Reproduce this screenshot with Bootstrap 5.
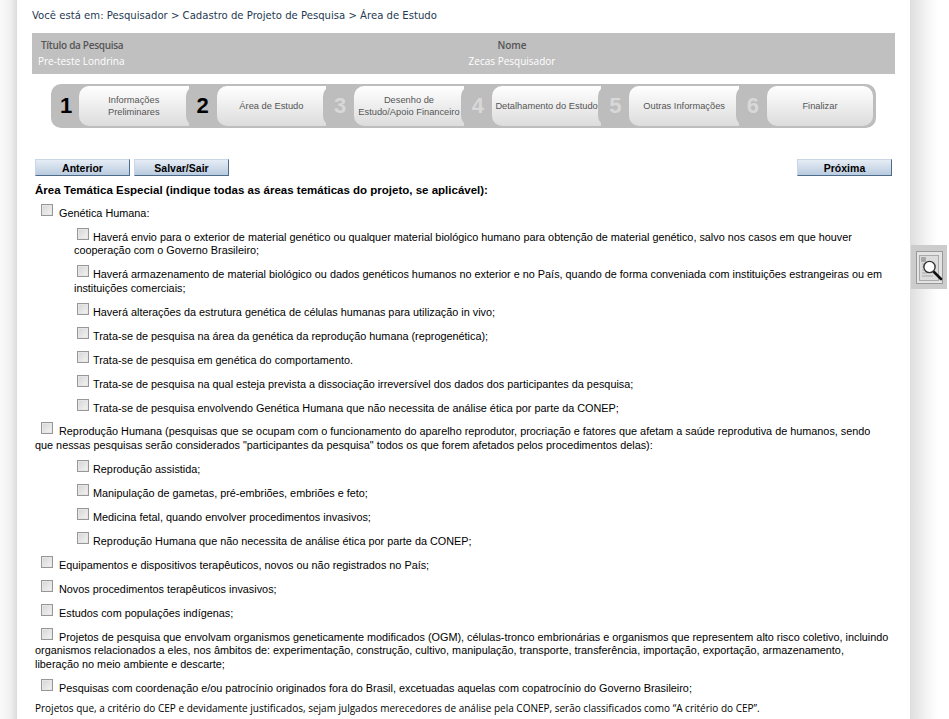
<!DOCTYPE html>
<html lang="pt-BR">
<head>
  <meta charset="UTF-8" />
  <title>Área de Estudo</title>
  <link href="https://cdn.jsdelivr.net/npm/bootstrap@5.3.3/dist/css/bootstrap.min.css" rel="stylesheet">
  <style>
    body {
      background: #fff;
      color: #000;
      font-family: "Liberation Sans", Arial, sans-serif;
      font-size: 10.85px;
      line-height: 13.7px;
    }
    .page-shell { width: 949px; height: 719px; overflow: hidden; }
    .edge-left { width: 17px; background: linear-gradient(to right, #fafafa, #f0f0f0 60%, #dcdcdc); }
    .edge-right { width: 28px; background: linear-gradient(to right, #dedede, #f4f4f4 60%, #fff); }
    .main-col { width: 893px; padding: 0 15px; }
    .trail { font-family: "DejaVu Sans", sans-serif; font-size: 10.1px; line-height: 12px; color: #1f3a52; padding-top: 10px; height: 33px; }
    .info-bar { display: grid; grid-template-columns: 400px 160px; align-content: start; background: #c0c0c0; height: 41px; padding-top: 4px; font-family: "Open Sans", sans-serif; font-size: 10px; line-height: 16px; }
    .info-head { color: #555; font-weight: 600; }
    .info-val { color: #fff; }
    .pad-t { padding-left: 9px; letter-spacing: -0.3px; }
    .pad-v { padding-left: 6px; }
    .steps { margin: 10px 19px 0; height: 44px; width: 825px; background: #bdbdbd; border-radius: 10px; padding: 2px 3px 2px 0; }
    .step-num { width: 31px; margin-left: -3px; flex: none; background: #bdbdbd; border-radius: 10px 0 0 10px; font-weight: 700; font-size: 22px; color: #d8d8d8; text-align: center; position: relative; line-height: 40px; padding-left: 3px; }
    .step-num:first-child { width: 28px; margin-left: 0; padding-left: 2px; }
    .step-num.on { color: #000; }
    .step-tab { width: 109.6px; flex: none; background: linear-gradient(#fff, #dcdcdc); border-radius: 10px 0 0 10px; font-size: 9.3px; line-height: 12px; color: #555; text-align: center; }
    .step-tab.last { width: 106px; border-radius: 10px; }
    .nav-btns { margin-top: 31px; padding: 0 3px; }
    .nav-btn { width: 95px; height: 17px; padding: 0; border: 0; border-right: 1px solid #4d6c8c; border-bottom: 1px solid #4d6c8c; border-top: 1px solid #c8d6e6; border-left: 1px solid #c8d6e6; border-radius: 0; background: linear-gradient(#e6edf5, #b9cbdf); color: #000; font-size: 10.5px; font-weight: 700; line-height: 14px; }
    .section-title { font-size: 11.5px; font-weight: 700; margin: 8px 0 6px 3px; }
    .opt { margin: 0 6px 7.23px 3px; }
    .opt.sub { margin-left: 42px; }
    .tick { appearance: none; width: 12px; height: 12px; margin: 0 6px 0 6px; vertical-align: 1px; border: 1px solid #979797; background: linear-gradient(135deg, #d4d4d4, #f4f4f4); box-shadow: inset 0 0 0 1px #e6e6e6; }
    .opt.sub .tick { margin: 0 4px 0 3px; }
    .foot-note { font-family: "Open Sans", sans-serif; font-size: 10px; margin: -1px 0 0 3px; }
    .zoom-tab { position: absolute; left: 911px; top: 245px; width: 36px; height: 44px; background: #ccc; display: flex; align-items: center; justify-content: center; }
  </style>
</head>
<body>
  <div class="page-shell d-flex position-relative">
    <div class="edge-left flex-shrink-0"></div>
    <div class="main-col flex-shrink-0">
      <div class="trail">Você está em: Pesquisador &gt; Cadastro de Projeto de Pesquisa &gt; Área de Estudo</div>

      <div class="info-bar">
        <div class="info-head pad-t">Título da Pesquisa</div>
        <div class="info-head text-center">Nome</div>
        <div class="info-val pad-v">Pre-teste Londrina</div>
        <div class="info-val text-center">Zecas Pesquisador</div>
      </div>

      <div class="steps d-flex">
        <div class="step-num on">1</div>
        <div class="step-tab d-flex align-items-center justify-content-center">Informações<br>Preliminares</div>
        <div class="step-num on">2</div>
        <div class="step-tab d-flex align-items-center justify-content-center">Área de Estudo</div>
        <div class="step-num">3</div>
        <div class="step-tab d-flex align-items-center justify-content-center">Desenho de<br>Estudo/Apoio Financeiro</div>
        <div class="step-num">4</div>
        <div class="step-tab d-flex align-items-center justify-content-center">Detalhamento do Estudo</div>
        <div class="step-num">5</div>
        <div class="step-tab d-flex align-items-center justify-content-center">Outras Informações</div>
        <div class="step-num">6</div>
        <div class="step-tab last d-flex align-items-center justify-content-center">Finalizar</div>
      </div>

      <div class="nav-btns d-flex gap-1">
        <button type="button" class="btn nav-btn">Anterior</button>
        <button type="button" class="btn nav-btn">Salvar/Sair</button>
        <button type="button" class="btn nav-btn ms-auto">Próxima</button>
      </div>

      <div class="section-title">Área Temática Especial (indique todas as áreas temáticas do projeto, se aplicável):</div>

      <div class="opt"><input type="checkbox" class="tick">Genética Humana:</div>
      <div class="opt sub"><input type="checkbox" class="tick">Haverá envio para o exterior de material genético ou qualquer material biológico humano para obtenção de material genético, salvo nos casos em que houver cooperação com o Governo Brasileiro;</div>
      <div class="opt sub"><input type="checkbox" class="tick">Haverá armazenamento de material biológico ou dados genéticos humanos no exterior e no País, quando de forma conveniada com instituições estrangeiras ou em instituições comerciais;</div>
      <div class="opt sub"><input type="checkbox" class="tick">Haverá alterações da estrutura genética de células humanas para utilização in vivo;</div>
      <div class="opt sub"><input type="checkbox" class="tick">Trata-se de pesquisa na área da genética da reprodução humana (reprogenética);</div>
      <div class="opt sub"><input type="checkbox" class="tick">Trata-se de pesquisa em genética do comportamento.</div>
      <div class="opt sub"><input type="checkbox" class="tick">Trata-se de pesquisa na qual esteja prevista a dissociação irreversível dos dados dos participantes da pesquisa;</div>
      <div class="opt sub"><input type="checkbox" class="tick">Trata-se de pesquisa envolvendo Genética Humana que não necessita de análise ética por parte da CONEP;</div>
      <div class="opt"><input type="checkbox" class="tick">Reprodução Humana (pesquisas que se ocupam com o funcionamento do aparelho reprodutor, procriação e fatores que afetam a saúde reprodutiva de humanos, sendo que nessas pesquisas serão considerados "participantes da pesquisa" todos os que forem afetados pelos procedimentos delas):</div>
      <div class="opt sub"><input type="checkbox" class="tick">Reprodução assistida;</div>
      <div class="opt sub"><input type="checkbox" class="tick">Manipulação de gametas, pré-embriões, embriões e feto;</div>
      <div class="opt sub"><input type="checkbox" class="tick">Medicina fetal, quando envolver procedimentos invasivos;</div>
      <div class="opt sub"><input type="checkbox" class="tick">Reprodução Humana que não necessita de análise ética por parte da CONEP;</div>
      <div class="opt"><input type="checkbox" class="tick">Equipamentos e dispositivos terapêuticos, novos ou não registrados no País;</div>
      <div class="opt"><input type="checkbox" class="tick">Novos procedimentos terapêuticos invasivos;</div>
      <div class="opt"><input type="checkbox" class="tick">Estudos com populações indígenas;</div>
      <div class="opt"><input type="checkbox" class="tick">Projetos de pesquisa que envolvam organismos geneticamente modificados (OGM), células-tronco embrionárias e organismos que representem alto risco coletivo, incluindo organismos relacionados a eles, nos âmbitos de: experimentação, construção, cultivo, manipulação, transporte, transferência, importação, exportação, armazenamento, liberação no meio ambiente e descarte;</div>
      <div class="opt"><input type="checkbox" class="tick">Pesquisas com coordenação e/ou patrocínio originados fora do Brasil, excetuadas aquelas com copatrocínio do Governo Brasileiro;</div>
      <div class="foot-note">Projetos que, a critério do CEP e devidamente justificados, sejam julgados merecedores de análise pela CONEP, serão classificados como “A critério do CEP”.</div>
    </div>
    <div class="edge-right flex-shrink-0"></div>

    <div class="zoom-tab">
      <svg width="27" height="33" viewBox="0 0 27 33">
        <rect x="0.5" y="0.5" width="26" height="32" fill="#e4e4e4" stroke="#999"/>
        <rect x="3.5" y="4.5" width="19" height="25" fill="#dcdcdc" stroke="#aaa"/>
        <path d="M5.5 6.5h4v4h-4zM6 13h3M6 16h3M6 19h3M6 22h5M6 25h11" stroke="#a8a8a8" stroke-width="1" fill="#a8a8a8"/>
        <path d="M18 21l7 7" stroke="#111" stroke-width="2.6" stroke-linecap="round"/>
        <circle cx="13.5" cy="16" r="5.6" fill="#fff" stroke="#333" stroke-width="1.4"/>
      </svg>
    </div>
  </div>
  <script src="https://cdn.jsdelivr.net/npm/bootstrap@5.3.3/dist/js/bootstrap.bundle.min.js"></script>
</body>
</html>
